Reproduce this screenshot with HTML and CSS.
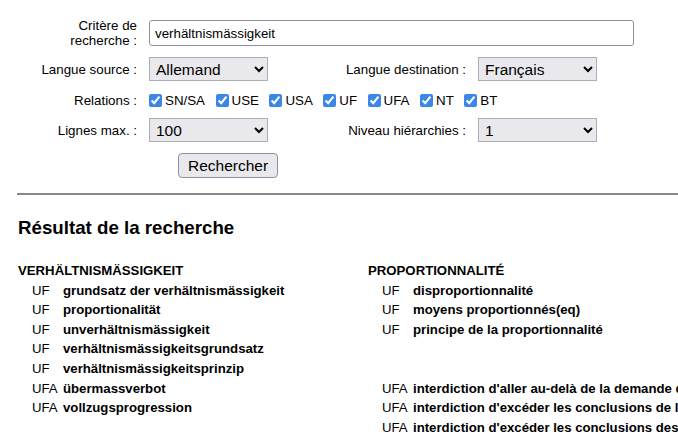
FILE: index.html
```html
<!DOCTYPE html>
<html lang="fr">
<head>
  <meta charset="UTF-8" />
  <title>Recherche terminologique</title>
  <link rel="stylesheet" href="styles.css">
</head>
<body>
  <form class="search-form">
    <label class="lbl" for="critere">Critère de<br>recherche :</label>
    <input type="text" id="critere" class="crit-input" value="verhältnismässigkeit" />

    <label class="lbl">Langue source :</label>
    <select class="sel"><option>Allemand</option></select>
    <label class="lbl">Langue destination :</label>
    <select class="sel"><option>Français</option></select>

    <label class="lbl">Relations :</label>
    <div class="rels">
      <label class="rel"><input type="checkbox" checked />SN/SA</label>
      <label class="rel"><input type="checkbox" checked />USE</label>
      <label class="rel"><input type="checkbox" checked />USA</label>
      <label class="rel"><input type="checkbox" checked />UF</label>
      <label class="rel"><input type="checkbox" checked />UFA</label>
      <label class="rel"><input type="checkbox" checked />NT</label>
      <label class="rel"><input type="checkbox" checked />BT</label>
    </div>

    <label class="lbl">Lignes max. :</label>
    <select class="sel"><option>100</option></select>
    <label class="lbl">Niveau hiérarchies :</label>
    <select class="sel"><option>1</option></select>

    <div class="btn-cell"><button type="button" class="btn">Rechercher</button></div>
  </form>

  <hr class="sep" />

  <h3 class="res-title">Résultat de la recherche</h3>

  <div class="results">
    <div class="col">
      <div class="term-head">VERHÄLTNISMÄSSIGKEIT</div>
      <div class="row"><span class="r">UF</span><b>grundsatz der verhältnismässigkeit</b></div>
      <div class="row"><span class="r">UF</span><b>proportionalität</b></div>
      <div class="row"><span class="r">UF</span><b>unverhältnismässigkeit</b></div>
      <div class="row"><span class="r">UF</span><b>verhältnismässigkeitsgrundsatz</b></div>
      <div class="row"><span class="r">UF</span><b>verhältnismässigkeitsprinzip</b></div>
      <div class="row"><span class="r">UFA</span><b>übermassverbot</b></div>
      <div class="row"><span class="r">UFA</span><b>vollzugsprogression</b></div>
    </div>
    <div class="col">
      <div class="term-head">PROPORTIONNALITÉ</div>
      <div class="row"><span class="r">UF</span><b>disproportionnalité</b></div>
      <div class="row"><span class="r">UF</span><b>moyens proportionnés(eq)</b></div>
      <div class="row"><span class="r">UF</span><b>principe de la proportionnalité</b></div>
      <div class="row"></div>
      <div class="row"></div>
      <div class="row"><span class="r">UFA</span><b>interdiction d'aller au-delà de la demande des parties</b></div>
      <div class="row"><span class="r">UFA</span><b>interdiction d'excéder les conclusions de la partie</b></div>
      <div class="row"><span class="r">UFA</span><b>interdiction d'excéder les conclusions des parties</b></div>
    </div>
  </div>
</body>
</html>
```

FILE: styles.css
```css
body {
  margin: 0;
  font-family: "Liberation Sans", Arial, sans-serif;
  color: #000;
  overflow: hidden;
}

/* formulaire */
.search-form {
  display: grid;
  grid-template-columns: 137px 180px 125px 156px;
  grid-template-rows: 36px 36px 26px 34px 37px;
  column-gap: 12px;
  align-items: center;
  padding-top: 15px;
  font-size: 13.33px;
}

.lbl {
  text-align: right;
  white-space: nowrap;
  line-height: 15px;
}

.crit-input {
  grid-column: 2 / 5;
  box-sizing: border-box;
  height: 26px;
  border: 1px solid #8f8f9d;
  border-radius: 3px;
  padding: 0 5px;
  font-family: inherit;
  font-size: 13.33px;
  color: #000;
  outline: none;
}

.sel {
  box-sizing: border-box;
  width: 119px;
  height: 24px;
  background: #e9e9ed;
  border: 1px solid #adadb5;
  border-radius: 0;
  font-family: inherit;
  font-size: 15.5px;
  color: #000;
  padding: 0 2px;
}

.rels {
  grid-column: 2 / 5;
  display: flex;
  align-items: center;
}

.rel {
  display: flex;
  align-items: center;
  margin-right: 10.5px;
}

.rel input {
  margin: 0 3px 0 0;
  width: 13px;
  height: 13px;
  accent-color: #3b87e6;
}

.btn-cell {
  grid-column: 2 / 5;
  padding-left: 29px;
}

.btn {
  height: 25px;
  padding: 0 9px;
  background: #e9e9ed;
  border: 1px solid #8f8f9d;
  border-radius: 4px;
  font-family: inherit;
  font-size: 15.5px;
  color: #000;
}

.sep {
  margin: 9px 0 0 17px;
  border: none;
  border-top: 2px solid #888;
}

.res-title {
  margin: 22px 0 0 18px;
  font-size: 18.72px;
  font-weight: bold;
}

/* résultats */
.results {
  display: grid;
  grid-template-columns: 350px 350px;
  margin: 22px 0 0 18px;
  font-size: 13.2px;
}

.col {
  white-space: nowrap;
}

.term-head {
  font-weight: bold;
  line-height: 19.6px;
}

.row {
  display: grid;
  grid-template-columns: 31px auto;
  height: 19.6px;
  line-height: 19.6px;
  padding-left: 14px;
}
```
